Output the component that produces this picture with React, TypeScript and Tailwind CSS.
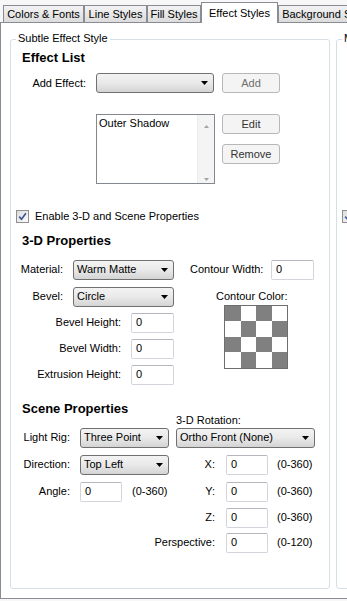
import React from 'react';

function Arrow() {
  return (
    <svg width="7" height="4" viewBox="0 0 7 4" className="shrink-0">
      <path d="M0 0h7L3.5 4z" fill="#000" />
    </svg>
  );
}

function Combo({ value, w }: { value?: string; w: string }) {
  return (
    <div className={`flex h-[20px] shrink-0 items-center justify-between rounded-[3px] border border-[#707070] bg-linear-to-b from-[#f3f3f3] via-[#e9e9e9] to-[#d4d4d4] pl-[3px] pr-[5px] ${w}`}>
      <span className="whitespace-nowrap">{value}</span>
      <Arrow />
    </div>
  );
}

function TextBox({ w }: { w: string }) {
  return (
    <div className={`flex h-[20px] shrink-0 items-center rounded-[2px] border border-[#d2d6dc] border-t-[#b4b7bd] bg-white pl-[4px] ${w}`}>0</div>
  );
}

function Btn({ label, dim }: { label: string; dim?: boolean }) {
  return (
    <div className={`flex h-[20px] w-[58px] items-center justify-center rounded-[3px] border border-[#b4b8bb] bg-[#f4f4f4] ${dim ? 'text-[#6f6f6f]' : 'text-[#333]'}`}>
      {label}
    </div>
  );
}

function Swatch() {
  const cells = Array.from({ length: 16 }, (_, i) => i);
  return (
    <div className="grid h-[64px] w-[64px] grid-cols-4 grid-rows-4 border border-[#6e6e6e]">
      {cells.map(i => (
        <div key={i} className={(Math.floor(i / 4) + i) % 2 === 0 ? 'bg-[#808080]' : 'bg-white'} />
      ))}
    </div>
  );
}

function EffectGroup({ title }: { title: string }) {
  return (
    <fieldset className="h-[558px] w-[320px] shrink-0 rounded-[3px] border border-[#d5dfe5]">
      <legend className="ml-[5px] px-[2px] pb-[3px] leading-[14px] whitespace-nowrap">{title}</legend>

      <div className="ml-[11px] mt-[2px] text-[13px] font-bold leading-4">Effect List</div>

      <div className="mt-[7px] flex items-center">
        <span className="w-[75px] shrink-0 text-right whitespace-nowrap">Add Effect:</span>
        <div className="ml-[10px]"><Combo w="w-[118px]" /></div>
        <div className="ml-[8px]"><Btn label="Add" dim /></div>
      </div>

      <div className="mt-[21px] flex items-start">
        <div className="ml-[85px] flex h-[70px] w-[119px] shrink-0 border border-[#828790] bg-white">
          <div className="flex-1 pl-[2px] pt-[1px] leading-[14px] whitespace-nowrap">Outer Shadow</div>
          <div className="flex w-[17px] flex-col items-center justify-between border-l border-[#ececec] bg-[#f4f4f4] pt-[10px] pb-[2px]">
            <svg width="5" height="3" viewBox="0 0 5 3"><path d="M0 3h5L2.5 0z" fill="#a3a3a3" /></svg>
            <svg width="5" height="3" viewBox="0 0 5 3"><path d="M0 0h5L2.5 3z" fill="#a3a3a3" /></svg>
          </div>
        </div>
        <div className="ml-[7px] flex flex-col">
          <Btn label="Edit" />
          <div className="mt-[10px]"><Btn label="Remove" /></div>
        </div>
      </div>

      <div className="ml-[5px] mt-[24px] flex items-center">
        <div className="flex h-[13px] w-[13px] shrink-0 items-center justify-center border border-[#8f8f8f] bg-linear-to-br from-[#dcdcdc] to-[#fbfbfb]">
          <svg width="9" height="9" viewBox="0 0 9 9">
            <path d="M1.2 4.6L3.5 7.2L7.9 1.2" fill="none" stroke="#3a5392" strokeWidth="1.6" />
          </svg>
        </div>
        <span className="ml-[6px] whitespace-nowrap">Enable 3-D and Scene Properties</span>
      </div>

      <div className="ml-[11px] mt-[8px] text-[13px] font-bold leading-4">3-D Properties</div>

      <div className="mt-[11px] flex items-center">
        <span className="w-[52px] shrink-0 text-right">Material:</span>
        <div className="ml-[10px]"><Combo value="Warm Matte" w="w-[101px]" /></div>
        <span className="ml-[16px] w-[73px] shrink-0 text-right whitespace-nowrap">Contour Width:</span>
        <div className="ml-[8px]"><TextBox w="w-[43px]" /></div>
      </div>

      <div className="mt-[7px] flex items-start">
        <div className="flex w-[163px] shrink-0 flex-col">
          <div className="flex items-center">
            <span className="w-[52px] shrink-0 text-right">Bevel:</span>
            <div className="ml-[10px]"><Combo value="Circle" w="w-[101px]" /></div>
          </div>
          {['Bevel Height:', 'Bevel Width:', 'Extrusion Height:'].map(l => (
            <div key={l} className="mt-[6px] flex items-center">
              <span className="w-[110px] shrink-0 text-right whitespace-nowrap">{l}</span>
              <div className="ml-[10px]"><TextBox w="w-[43px]" /></div>
            </div>
          ))}
        </div>
        <div className="ml-[42px] flex flex-col">
          <span className="mt-[2px] leading-[14px] whitespace-nowrap">Contour Color:</span>
          <div className="ml-[8px] mt-[2px]"><Swatch /></div>
        </div>
      </div>

      <div className="ml-[11px] mt-[16px] text-[13px] font-bold leading-4">Scene Properties</div>
      <div className="ml-[165px] -mt-[4px] leading-[14px] whitespace-nowrap">3-D Rotation:</div>

      <div className="mt-[1px] flex items-center">
        <span className="w-[59px] shrink-0 text-right whitespace-nowrap">Light Rig:</span>
        <div className="ml-[10px]"><Combo value="Three Point" w="w-[89px]" /></div>
        <div className="ml-[7px]"><Combo value="Ortho Front (None)" w="w-[139px]" /></div>
      </div>

      <div className="mt-[7px] flex items-center">
        <span className="w-[59px] shrink-0 text-right">Direction:</span>
        <div className="ml-[10px]"><Combo value="Top Left" w="w-[89px]" /></div>
        <span className="w-[46px] shrink-0 text-right">X:</span>
        <div className="ml-[11px]"><TextBox w="w-[42px]" /></div>
        <span className="ml-[9px] whitespace-nowrap">(0-360)</span>
      </div>

      <div className="mt-[7px] flex items-center">
        <span className="w-[59px] shrink-0 text-right">Angle:</span>
        <div className="ml-[10px]"><TextBox w="w-[42px]" /></div>
        <span className="ml-[10px] w-[37px] shrink-0 whitespace-nowrap">(0-360)</span>
        <span className="w-[46px] shrink-0 text-right">Y:</span>
        <div className="ml-[11px]"><TextBox w="w-[42px]" /></div>
        <span className="ml-[9px] whitespace-nowrap">(0-360)</span>
      </div>

      <div className="mt-[6px] flex items-center">
        <span className="ml-[124px] w-[80px] shrink-0 text-right">Z:</span>
        <div className="ml-[11px]"><TextBox w="w-[42px]" /></div>
        <span className="ml-[9px] whitespace-nowrap">(0-360)</span>
      </div>

      <div className="mt-[5px] flex items-center">
        <span className="ml-[124px] w-[80px] shrink-0 text-right">Perspective:</span>
        <div className="ml-[11px]"><TextBox w="w-[42px]" /></div>
        <span className="ml-[9px] whitespace-nowrap">(0-120)</span>
      </div>
    </fieldset>
  );
}

function Tab({ label, w, active }: { label: string; w: string; active?: boolean }) {
  if (active) {
    return (
      <div className={`relative z-10 -mb-px flex h-[21px] shrink-0 justify-center border border-b-0 border-[#898c95] bg-white pt-[4px] leading-[13px] whitespace-nowrap ${w}`}>
        {label}
      </div>
    );
  }
  return (
    <div className={`flex h-[17px] shrink-0 items-center justify-center overflow-hidden border border-b-0 border-[#898c95] bg-linear-to-b from-[#f3f3f3] to-[#dcdcdc] whitespace-nowrap ${w}`}>
      {label}
    </div>
  );
}

export default function App() {
  return (
    <div className="h-[601px] w-[347px] overflow-hidden bg-[#f7f7f7] font-['Liberation_Sans',Arial,sans-serif] text-[11px] text-black">
      <div className="flex h-[22px] items-end pl-[3px]">
        <Tab label="Colors & Fonts" w="w-[81px]" />
        <Tab label="Line Styles" w="w-[63px]" />
        <Tab label="Fill Styles" w="w-[54px]" />
        <Tab label="Effect Styles" w="w-[77px]" active />
        <Tab label="Background Styles" w="w-[100px]" />
      </div>
      <div className="flex h-[577px] w-[700px] items-start border-y border-l border-[#898c95] bg-white pl-[9px] pt-[8px]">
        <EffectGroup title="Subtle Effect Style" />
        <div className="ml-[6px]">
          <EffectGroup title="Moderate Effect Style" />
        </div>
      </div>
    </div>
  );
}
